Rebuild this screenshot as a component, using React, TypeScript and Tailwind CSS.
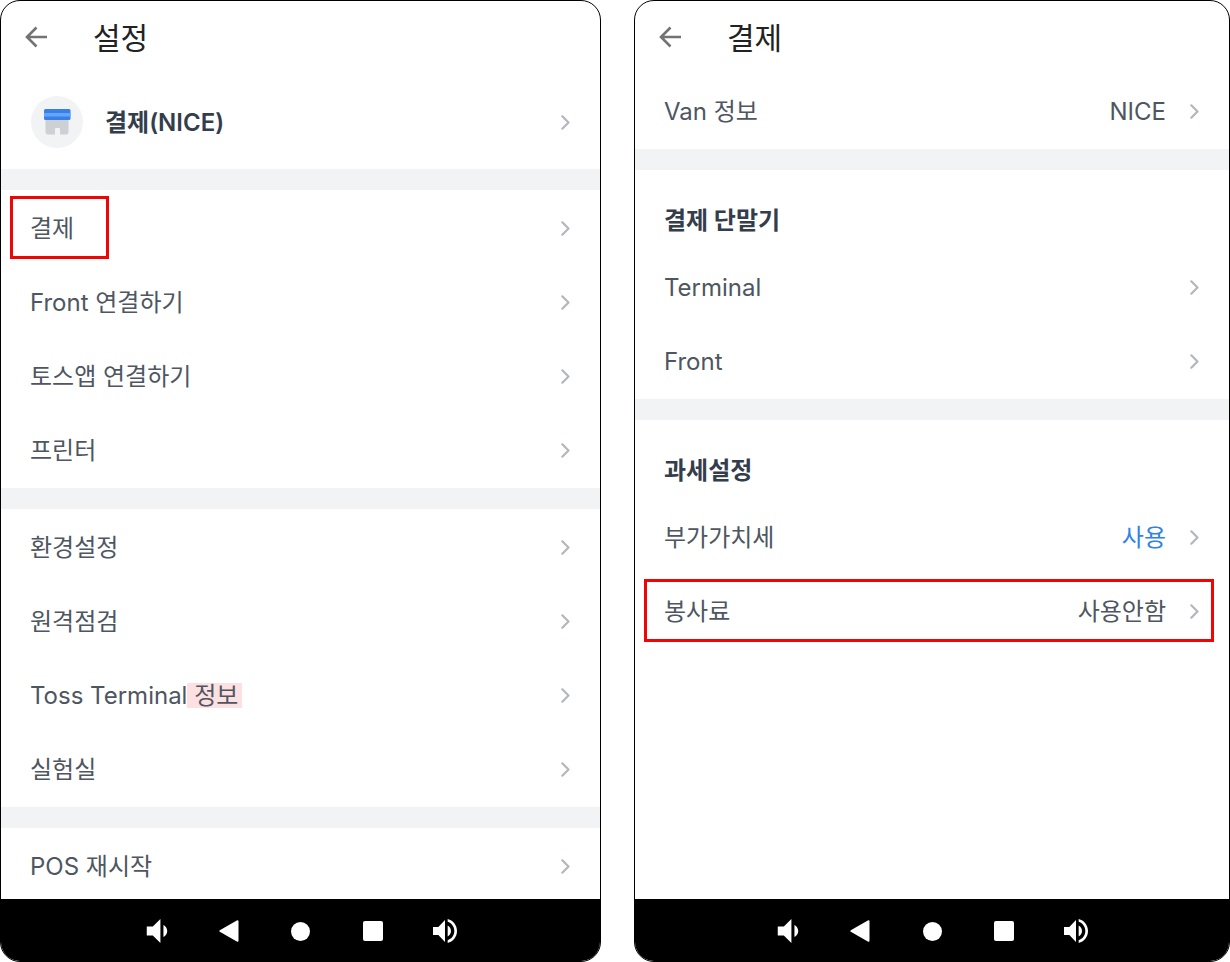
import type { ReactNode } from "react";

const ROW_TEXT = "text-2xl text-[#4e5661]";

type MenuItem = {
  label: ReactNode;
  value?: string;
  valueClassName?: string;
  highlightClassName?: string;
};

type MenuSection = {
  title?: string;
  items: MenuItem[];
};

const SETTINGS_SECTIONS: MenuSection[] = [
  {
    items: [
      { label: "결제", highlightClassName: "left-[9px] w-[99px]" },
      { label: "Front 연결하기" },
      { label: "토스앱 연결하기" },
      { label: "프린터" },
    ],
  },
  {
    items: [
      { label: "환경설정" },
      { label: "원격점검" },
      {
        label: (
          <>
            Toss Terminal
            <mark className="inline-block h-[25px] bg-[#fde0e2] pr-1 leading-[25px] text-inherit">&nbsp;정보</mark>
          </>
        ),
      },
      { label: "실험실" },
    ],
  },
  { items: [{ label: "POS 재시작" }] },
];

const PAYMENT_SECTIONS: MenuSection[] = [
  { items: [{ label: "Van 정보", value: "NICE" }] },
  { title: "결제 단말기", items: [{ label: "Terminal" }, { label: "Front" }] },
  {
    title: "과세설정",
    items: [
      { label: "부가가치세", value: "사용", valueClassName: "text-[#3182e6]" },
      { label: "봉사료", value: "사용안함", highlightClassName: "left-[9px] right-[15px]" },
    ],
  },
];

export default function App() {
  return (
    <div className="grid h-screen grid-cols-[601fr_596fr] gap-[33px] bg-white font-['Inter','Noto_Sans_CJK_KR',sans-serif]">
      <Device title="설정">
        <button type="button" className="flex h-24 w-full shrink-0 items-center pt-0.5 pr-[30px] pl-[30px] text-left">
          <span className="flex size-[52px] items-center justify-center rounded-full bg-[#f2f3f4]">
            <StoreIcon />
          </span>
          <span className="ml-[22px] flex-1 pt-0.5 text-2xl font-semibold text-[#333d4b]">결제(NICE)</span>
          <Chevron />
        </button>
        <Divider />
        <Sections sections={SETTINGS_SECTIONS} />
      </Device>
      <Device title="결제">
        <Sections sections={PAYMENT_SECTIONS} />
      </Device>
    </div>
  );
}

function Device({ title, children }: { title: string; children: ReactNode }) {
  return (
    <section className="flex min-h-0 min-w-0 flex-col overflow-hidden rounded-[20px] border border-black bg-white">
      <header className="flex h-[72px] shrink-0 items-center pl-[23px]">
        <button type="button" aria-label="뒤로">
          <BackIcon />
        </button>
        <h1 className="ml-[45px] pt-0.5 text-[30px] leading-9 text-[#222222]">{title}</h1>
      </header>
      <main className="min-h-0 flex-1 overflow-hidden">{children}</main>
      <NavigationBar />
    </section>
  );
}

function Sections({ sections }: { sections: MenuSection[] }) {
  return sections.map((section, index) => (
    <div key={index}>
      {index > 0 && <Divider />}
      <div className="py-px">
        {section.title && (
          <h2 className="flex h-[79px] items-center pt-5 pl-[29px] text-2xl font-bold text-[#333d4b]">
            {section.title}
          </h2>
        )}
        <ul>
          {section.items.map((item, itemIndex) => (
            <MenuRow key={itemIndex} {...item} />
          ))}
        </ul>
      </div>
    </div>
  ));
}

function MenuRow({ label, value, valueClassName = "", highlightClassName }: MenuItem) {
  return (
    <li className="relative">
      <button type="button" className={`flex h-[74px] w-full items-center pr-[30px] pl-[29px] text-left ${ROW_TEXT}`}>
        <span className="flex-1 pt-0.5">{label}</span>
        {value && <span className={`mr-6 pt-0.5 ${valueClassName}`}>{value}</span>}
        <Chevron />
      </button>
      {highlightClassName && (
        <span
          className={`pointer-events-none absolute top-[5px] h-[63px] border-3 border-[#f00505] ${highlightClassName}`}
        />
      )}
    </li>
  );
}

function Divider() {
  return <div className="h-[21px] bg-[#f1f3f4]" />;
}

function NavigationBar() {
  return (
    <nav className="flex h-[62px] shrink-0 items-center justify-center gap-11 bg-black pt-0.5 text-white">
      <NavButton label="볼륨 낮추기">
        <svg className="h-6 w-[22px]" viewBox="4.5 4 14.5 16" preserveAspectRatio="none" fill="currentColor">
          <path d="M18.5 12c0-1.77-1.02-3.29-2.5-4.03v8.05c1.48-.73 2.5-2.25 2.5-4.02zM5 9v6h4l5 5V4L9 9H5z" />
        </svg>
      </NavButton>
      <NavButton label="이전">
        <svg className="h-[22px] w-5" viewBox="0 0 20 22" fill="currentColor">
          <path d="M.8 10.2 17.8.4q1.700-.8 1.700 1v19.200q0 1.800-1.700 1L.8 11.800q-1-.8 0-1.600z" />
        </svg>
      </NavButton>
      <NavButton label="홈">
        <span className="size-[19px] rounded-full bg-white" />
      </NavButton>
      <NavButton label="최근 앱">
        <span className="size-5 rounded-[2px] bg-white" />
      </NavButton>
      <NavButton label="볼륨 높이기">
        <svg className="size-6" viewBox="3 3.2 18 17.6" preserveAspectRatio="none" fill="currentColor">
          <path d="M3 9v6h4l5 5V4L7 9H3zm13.5 3c0-1.77-1.02-3.29-2.5-4.03v8.05c1.48-.73 2.5-2.25 2.5-4.02zM14 3.23v2.06c2.89.86 5 3.54 5 6.71s-2.11 5.85-5 6.71v2.06c4.01-.91 7-4.49 7-8.77s-2.99-7.86-7-8.77z" />
        </svg>
      </NavButton>
    </nav>
  );
}

function NavButton({ label, children }: { label: string; children: ReactNode }) {
  return (
    <button type="button" aria-label={label} className="flex size-7 items-center justify-center">
      {children}
    </button>
  );
}

function Chevron() {
  return (
    <svg className="h-[15px] w-[9px] shrink-0" viewBox="0 0 9 15" fill="none" stroke="#b3b7bd" strokeWidth="2.2">
      <path d="m1.300 1.300 6.200 6.200-6.200 6.200" strokeLinecap="round" strokeLinejoin="round" />
    </svg>
  );
}

function BackIcon() {
  return (
    <svg className="size-6" viewBox="0 0 24 24" fill="none" stroke="#737373" strokeWidth="2.6">
      <path d="M23 12H3M12.500 2.500 3 12l9.500 9.500" />
    </svg>
  );
}

function StoreIcon() {
  return (
    <svg className="h-[26px] w-7" viewBox="0 0 28 26">
      <path d="M2.500 8h23v15q0 2.500-2.500 2.500h-6V20q0-1-1-1h-3q-1 0-1 1v5.500H5q-2.500 0-2.500-2.500z" fill="#cdd0d4" />
      <rect x="1" y="0" width="26.500" height="11" rx="1.500" fill="#3a7fe8" />
      <rect x="1" y="4" width="26.500" height="3.500" fill="#62a5fb" />
    </svg>
  );
}
